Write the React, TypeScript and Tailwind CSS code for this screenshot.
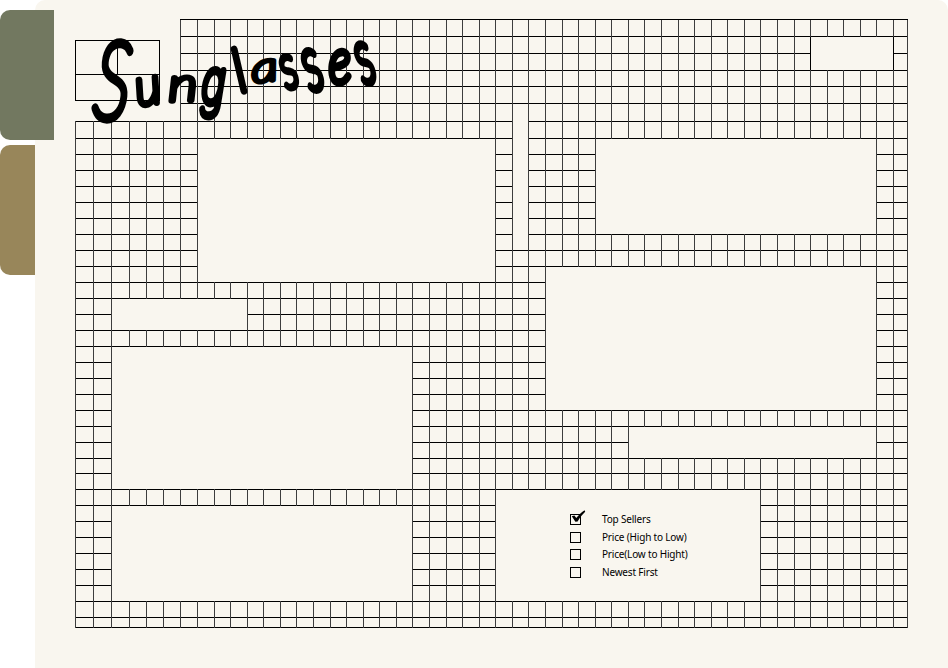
const columnLines = Array.from({ length: 50 }, (_, i) => i + 1);
const rowLines = Array.from({ length: 38 }, (_, i) => i + 1);

const columnEdges = [
  75, 93, 111, 129, 146, 163, 180, 197, 214, 230, 247, 263, 280, 296, 313, 330, 346, 363, 379, 396, 412, 429, 446,
  462, 479, 495, 512, 528, 545, 562, 578, 595, 611, 628, 644, 661, 678, 694, 711, 727, 744, 760, 777, 794, 810, 827,
  843, 860, 876, 893, 907,
];
const rowEdges = [
  19, 36, 53, 70, 86, 103, 121, 138, 154, 170, 186, 202, 218, 234, 250, 266, 282, 298, 314, 330, 346, 362, 378, 394,
  410, 426, 442, 458, 473, 489, 505, 521, 537, 553, 569, 585, 601, 617, 627,
];

const tracks = (edges: number[]) =>
  edges
    .slice(1)
    .map((edge, i) => `${edge - edges[i]}px`)
    .concat("1px")
    .join(" ");

type Area = { x1: number; x2: number; y1: number; y2: number };

const area = ({ x1, x2, y1, y2 }: Area) => ({
  gridColumn: `${columnEdges.indexOf(x1) + 1} / ${columnEdges.indexOf(x2) + 1}`,
  gridRow: `${rowEdges.indexOf(y1) + 1} / ${rowEdges.indexOf(y2) + 1}`,
});

const panels: Area[] = [
  { x1: 197, x2: 495, y1: 138, y2: 282 },
  { x1: 512, x2: 528, y1: 103, y2: 250 },
  { x1: 595, x2: 876, y1: 138, y2: 234 },
  { x1: 545, x2: 876, y1: 266, y2: 410 },
  { x1: 111, x2: 247, y1: 298, y2: 330 },
  { x1: 111, x2: 412, y1: 346, y2: 489 },
  { x1: 111, x2: 412, y1: 505, y2: 601 },
  { x1: 628, x2: 876, y1: 426, y2: 458 },
];

const lato = "font-['Lato',sans-serif]";
const inter = "font-['Inter',sans-serif]";

const letters = [
  { char: "S", at: "translate(92 117) rotate(5) scale(1.45 2.16)", stroke: 4.2, font: lato },
  { char: "u", at: "translate(138 106) rotate(-10) scale(1 1.04)", stroke: 6.3, font: lato },
  { char: "n", at: "translate(169 101) rotate(-2) scale(1.14 0.93)", stroke: 6.1, font: lato },
  { char: "g", at: "translate(201 103) rotate(3) scale(0.8 1.22)", stroke: 6.4, font: inter },
  { char: "l", at: "translate(241 92) rotate(-19) scale(1 1.18)", stroke: 6.3, font: lato },
  { char: "a", at: "translate(253 83) rotate(-8) scale(1.08 0.82)", stroke: 6, font: lato },
  { char: "s", at: "translate(287 89) rotate(-20) scale(0.8 1.24)", stroke: 6.2, font: lato },
  { char: "s", at: "translate(311 91) rotate(-20) scale(0.9 1.54)", stroke: 5.8, font: lato },
  { char: "e", at: "translate(330 83) rotate(-4) scale(0.96 1.22)", stroke: 6.5, font: lato },
  { char: "s", at: "translate(364 84) rotate(-20) scale(0.84 1.54)", stroke: 5.8, font: lato },
];

function Title() {
  return (
    <h1 className="pointer-events-none absolute left-0 top-0">
      <svg className="overflow-visible" width="400" height="140" viewBox="0 0 400 140" aria-label="Sunglasses">
        {letters.map(({ char, at, stroke, font }, i) => (
          <text
            key={i}
            transform={at}
            strokeWidth={stroke}
            strokeLinejoin="round"
            className={`fill-black stroke-black text-[50px] font-thin italic leading-normal ${font}`}
          >
            {char}
          </text>
        ))}
      </svg>
    </h1>
  );
}

function Option({ label, checked = false }: { label: string; checked?: boolean }) {
  return (
    <label className="flex h-[11px] items-center">
      <span className="relative block size-[11px] shrink-0 border border-black">
        {checked && (
          <svg className="absolute -left-px -top-[5px]" width="16" height="16" viewBox="0 0 16 16">
            <path d="M1.8 6.2 4.4 5.4 6.3 8C8.5 5 11 2.5 14.6 0.2L15.2 1.8C12.2 4.5 9.8 8 7.6 11.5L5.4 11.7Z" />
          </svg>
        )}
      </span>
      <span className="ml-[21px] whitespace-nowrap font-['Noto_Sans',sans-serif] text-[10px] leading-[11px] tracking-[-0.18px] text-black">
        {label}
      </span>
    </label>
  );
}

export default function App() {
  return (
    <div className="relative flex h-[668px] w-[948px] overflow-hidden bg-white">
      <nav className="flex w-[35px] shrink-0 flex-col gap-[5px] pt-[10px]">
        <button className="z-10 h-[130px] w-[54px] rounded-l-[10px] bg-[#727860]" aria-label="Green" />
        <button className="h-[130px] w-[35px] rounded-l-[10px] bg-[#98865a]" aria-label="Ochre" />
      </nav>
      <main className="flex-1 rounded-t-[10px] bg-[#f9f6ef] pl-[40px] pt-[19px]">
        <div
          className="grid w-[833px]"
          style={{ gridTemplateColumns: tracks(columnEdges), gridTemplateRows: tracks(rowEdges) }}
        >
          {rowLines.concat(39).map((row) => (
            <div key={row} className="h-px bg-black" style={{ gridRow: row, gridColumn: "1 / -1" }} />
          ))}
          {columnLines.concat(51).map((column) => (
            <div
              key={column}
              className="mt-px w-px bg-[#3d3d3d]"
              style={{ gridColumn: column, gridRow: "1 / -1" }}
            />
          ))}
          {panels.map((panel, i) => (
            <section key={i} className="ml-px mt-px bg-[#f9f6ef]" style={area(panel)} />
          ))}
          <section
            className="-mr-px mt-px border-x border-black bg-[#f9f6ef]"
            style={area({ x1: 810, x2: 893, y1: 36, y2: 70 })}
          />
          <header className="bg-[#f9f6ef] pt-[21px]" style={area({ x1: 75, x2: 180, y1: 19, y2: 121 })}>
            <div className="flex h-[61px] w-[85px] flex-col border border-black">
              <div className="flex h-[34px] shrink-0 border-b border-black">
                <div className="w-[42px] border-r border-black" />
              </div>
            </div>
          </header>
          <section
            className="ml-px mt-px flex flex-col bg-[#f9f6ef] pl-[74px] pt-[24px]"
            style={area({ x1: 495, x2: 760, y1: 489, y2: 601 })}
          >
            <Option label="Top Sellers" checked />
            <div className="h-[7px]" />
            <Option label="Price (High to Low)" />
            <div className="h-[6px]" />
            <Option label="Price(Low to Hight)" />
            <div className="h-[7px]" />
            <Option label="Newest First" />
          </section>
        </div>
      </main>
      <Title />
    </div>
  );
}
